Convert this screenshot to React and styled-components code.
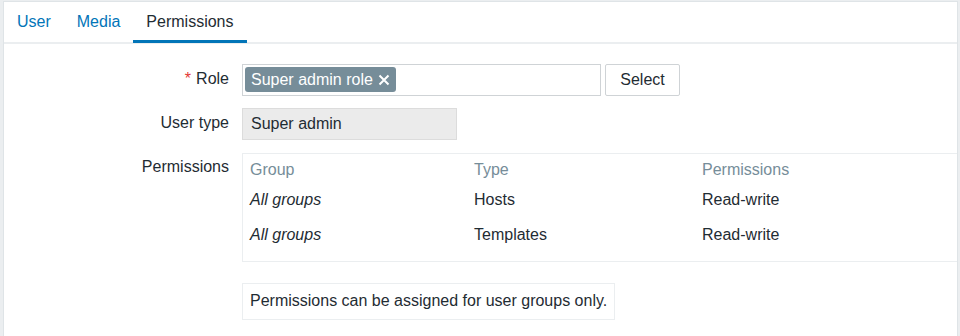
import React from "react";
import styled, { createGlobalStyle } from "styled-components";

const Global = createGlobalStyle`
  html, body { margin: 0; padding: 0; background: #ebeef0; }
  body { font-family: "Liberation Sans", Arial, sans-serif; font-size: 16px; color: #1f2c33; }
`;

const Page = styled.div`
  width: 960px;
  height: 336px;
  box-sizing: border-box;
  padding: 1px 2px 0 3px;
  overflow: hidden;
`;

const Panel = styled.div`
  background: #fff;
  border: 1px solid #dfe4e7;
  border-bottom: none;
  height: 340px;
`;

const TabBar = styled.div`
  display: flex;
  height: 40px;
  border-bottom: 2px solid #ebeef0;
`;

const Tab = styled.div`
  padding: 1px 13px 0;
  display: flex;
  align-items: center;
  color: ${(p) => (p.$active ? "#1f2c33" : "#0275b8")};
  border-bottom: 3px solid ${(p) => (p.$active ? "#0275b8" : "transparent")};
  margin-bottom: -1px;
`;

const Form = styled.div`
  padding-top: 20px;
  display: grid;
  grid-template-columns: 225px 1fr;
  column-gap: 13px;
  row-gap: 12px;
`;

const Label = styled.div`
  text-align: right;
  line-height: ${(p) => p.$lh || 29}px;
  height: 32px;
  white-space: nowrap;
`;

const Req = styled.span`
  color: #e33734;
  margin-right: 5px;
`;

const Field = styled.div`
  display: flex;
  align-items: flex-start;
  gap: 4px;
  margin-top: ${(p) => p.$mt || 0}px;
`;

const Multi = styled.div`
  width: 359px;
  height: 32px;
  box-sizing: border-box;
  border: 1px solid #cfd3d6;
  padding: 2px;
  display: flex;
  align-items: flex-start;
`;

const Chip = styled.span`
  display: inline-flex;
  align-items: center;
  height: 25px;
  box-sizing: border-box;
  padding: 0 6px;
  background: #768d99;
  color: #fff;
  border-radius: 3px;
  gap: 5px;
`;

const Button = styled.button`
  width: 75px;
  height: 32px;
  background: #fff;
  border: 1px solid #cfd3d6;
  border-radius: 2px;
  font: inherit;
  color: #1f2c33;
  padding: 0;
`;

const ReadOnly = styled.div`
  width: 215px;
  height: 32px;
  box-sizing: border-box;
  background: #ebebeb;
  border: 1px solid #dcdcdc;
  padding: 0 8px;
  line-height: 30px;
`;

const TableBox = styled.div`
  flex: 1;
  border: 1px solid #ebeef0;
  border-right: none;
  padding: 4px 0 9px 7px;
`;

const Row = styled.div`
  display: grid;
  grid-template-columns: 224px 228px 1fr;
  height: ${(p) => (p.$head ? 24 : 35)}px;
  align-items: center;
  color: ${(p) => (p.$head ? "#768d99" : "#1f2c33")};
`;

const Cell = styled.span`
  font-style: ${(p) => (p.$italic ? "italic" : "normal")};
`;

const Note = styled.div`
  border: 1px solid #ebeef0;
  padding: 0 7px;
  height: 37px;
  line-height: 34px;
  box-sizing: border-box;
  margin-top: 9px;
`;

const Close = () => (
  <svg width="12" height="12" viewBox="0 0 12 12">
    <path d="M1.5 1.5 L10.5 10.5 M10.5 1.5 L1.5 10.5" stroke="#fff" strokeWidth="2" />
  </svg>
);

const rows = [
  ["All groups", "Hosts", "Read-write"],
  ["All groups", "Templates", "Read-write"],
];

export default function App() {
  return (
    <>
      <Global />
      <Page>
        <Panel>
          <TabBar>
            <Tab>User</Tab>
            <Tab>Media</Tab>
            <Tab $active>Permissions</Tab>
          </TabBar>
          <Form>
            <Label>
              <Req>*</Req>Role
            </Label>
            <Field>
              <Multi>
                <Chip>
                  Super admin role <Close />
                </Chip>
              </Multi>
              <Button>Select</Button>
            </Field>
            <Label>User type</Label>
            <Field>
              <ReadOnly>Super admin</ReadOnly>
            </Field>
            <Label $lh={30}>Permissions</Label>
            <Field $mt={1}>
              <TableBox>
                <Row $head>
                  <Cell>Group</Cell>
                  <Cell>Type</Cell>
                  <Cell>Permissions</Cell>
                </Row>
                {rows.map((r, i) => (
                  <Row key={i}>
                    <Cell $italic>{r[0]}</Cell>
                    <Cell>{r[1]}</Cell>
                    <Cell>{r[2]}</Cell>
                  </Row>
                ))}
              </TableBox>
            </Field>
            <div />
            <Field>
              <Note>Permissions can be assigned for user groups only.</Note>
            </Field>
          </Form>
        </Panel>
      </Page>
    </>
  );
}
